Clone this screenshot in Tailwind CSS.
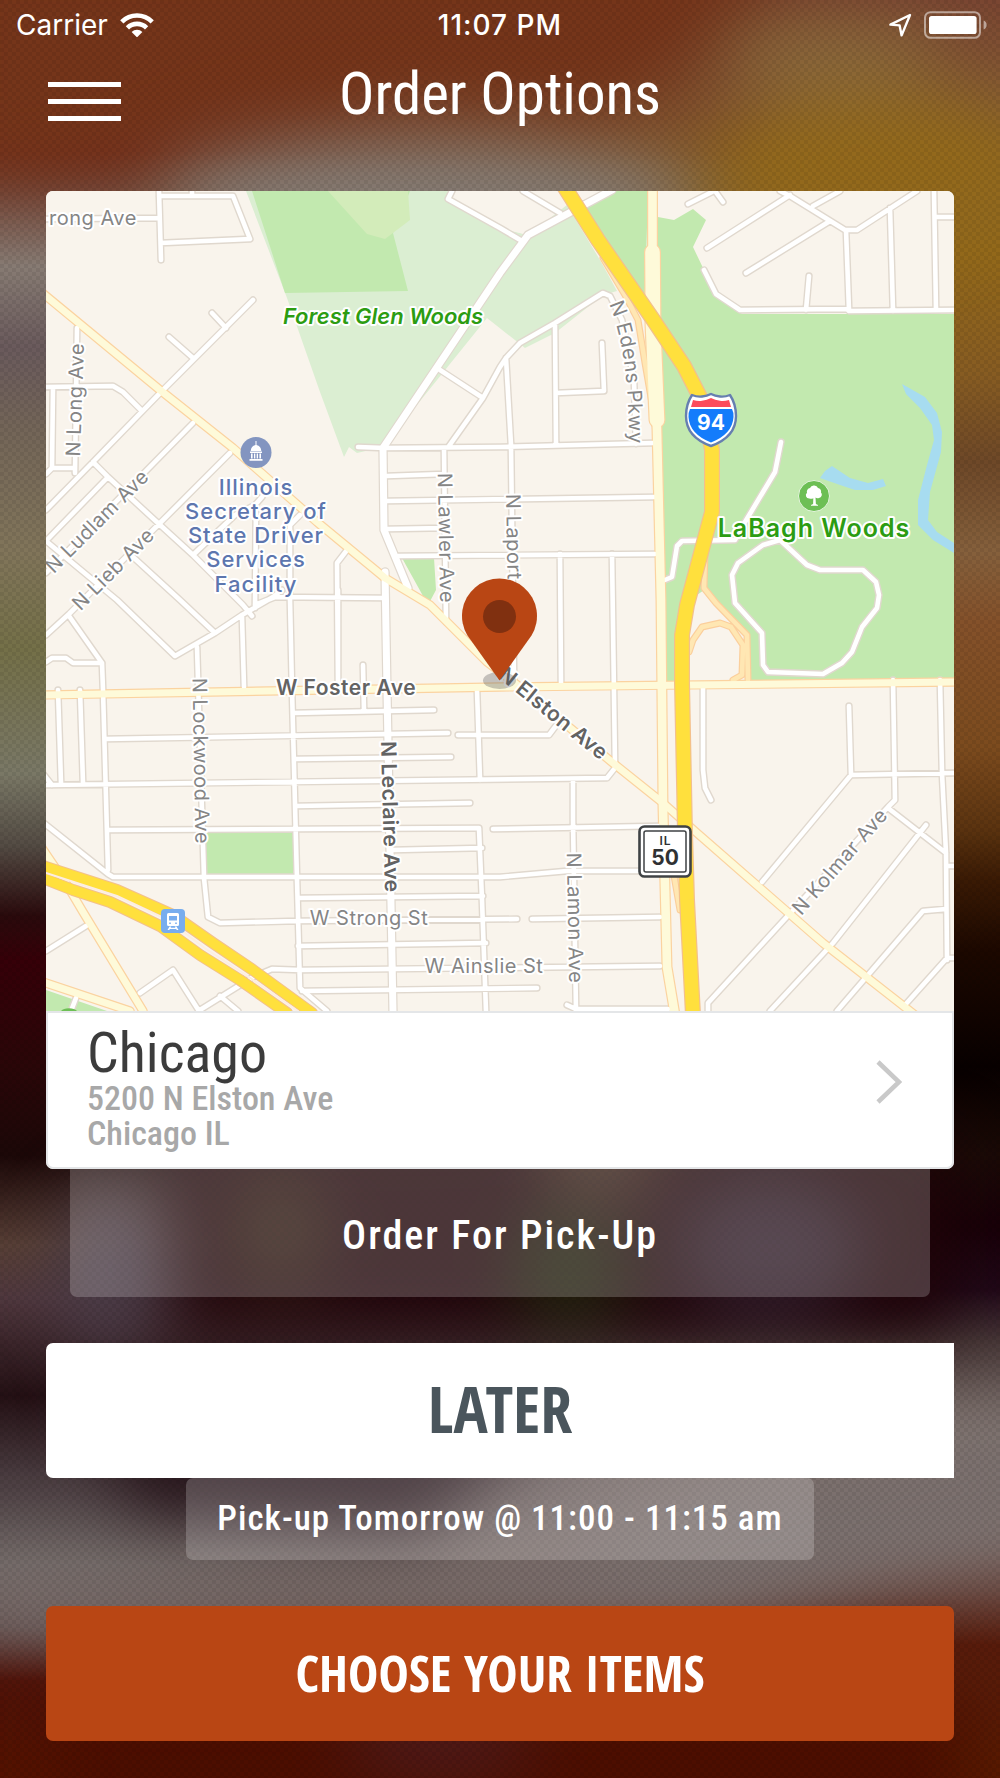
<!DOCTYPE html>
<html lang="en">
<head>
<meta charset="utf-8">
<meta name="viewport" content="width=device-width, initial-scale=1">
<title>Order Options</title>
<script src="https://cdn.jsdelivr.net/npm/@tailwindcss/browser@4"></script>
</head>
<body class="relative isolate flex min-h-screen flex-col overflow-x-hidden bg-[#1a0608] font-['Roboto_Condensed','Roboto',sans-serif] text-white">

<!-- Blurred backdrop -->
<svg class="absolute inset-0 -z-10 h-full w-full" viewBox="0 0 1000 1778" preserveAspectRatio="none" aria-hidden="true">
  <defs>
    <linearGradient id="bgLeft" x1="0" y1="0" x2="0" y2="1778" gradientUnits="userSpaceOnUse">
      <stop offset="0" stop-color="#73321a"/><stop offset=".085" stop-color="#74301f"/><stop offset=".105" stop-color="#754638"/>
      <stop offset=".15" stop-color="#877b73"/><stop offset=".195" stop-color="#6a5a5c"/><stop offset=".24" stop-color="#736558"/>
      <stop offset=".31" stop-color="#81755a"/><stop offset=".365" stop-color="#747048"/><stop offset=".435" stop-color="#7a7866"/>
      <stop offset=".475" stop-color="#544c44"/><stop offset=".515" stop-color="#2a0a0c"/><stop offset=".54" stop-color="#360008"/>
      <stop offset=".6" stop-color="#2a0608"/><stop offset=".65" stop-color="#1c0808"/><stop offset=".7" stop-color="#583f36"/>
      <stop offset=".73" stop-color="#50383e"/><stop offset=".785" stop-color="#241014"/><stop offset=".83" stop-color="#4a3c40"/>
      <stop offset=".88" stop-color="#6e6664"/><stop offset=".915" stop-color="#624c4a"/><stop offset=".945" stop-color="#501208"/><stop offset="1" stop-color="#541200"/>
    </linearGradient>
    <linearGradient id="bgRight" x1="0" y1="0" x2="0" y2="1778" gradientUnits="userSpaceOnUse">
      <stop offset="0" stop-color="#7a4632"/><stop offset=".06" stop-color="#855c34"/><stop offset=".1" stop-color="#8c6828"/><stop offset=".14" stop-color="#93691a"/>
      <stop offset=".21" stop-color="#875c22"/><stop offset=".26" stop-color="#6e4828"/><stop offset=".31" stop-color="#85603c"/>
      <stop offset=".35" stop-color="#84512a"/><stop offset=".42" stop-color="#7c4b1e"/><stop offset=".465" stop-color="#5c3410"/>
      <stop offset=".495" stop-color="#3a1a04"/><stop offset=".535" stop-color="#1c0800"/><stop offset=".6" stop-color="#080000"/>
      <stop offset=".65" stop-color="#1a0a06"/><stop offset=".69" stop-color="#180008"/><stop offset=".725" stop-color="#200818"/>
      <stop offset=".755" stop-color="#483838"/><stop offset=".81" stop-color="#847872"/><stop offset=".86" stop-color="#80706c"/>
      <stop offset=".895" stop-color="#6a4840"/><stop offset=".925" stop-color="#581c0c"/><stop offset="1" stop-color="#581a00"/>
    </linearGradient>
    <linearGradient id="fade" x1="0" x2="1" y1="0" y2="0">
      <stop offset=".1" stop-color="#000"/><stop offset=".9" stop-color="#fff"/>
    </linearGradient>
    <mask id="toRight"><rect width="1000" height="1778" fill="url(#fade)"/></mask>
    <filter id="soft" x="-60%" y="-60%" width="220%" height="220%" color-interpolation-filters="sRGB"><feGaussianBlur stdDeviation="32"/></filter>
    <pattern id="weave" width="8" height="8" patternUnits="userSpaceOnUse">
      <path d="M0 0h4v4H0zM4 4h4v4H4z" fill="#000" fill-opacity=".07"/>
    </pattern>
  </defs>
  <rect width="1000" height="1778" fill="url(#bgLeft)"/>
  <rect width="1000" height="1778" fill="url(#bgRight)" mask="url(#toRight)"/>
  <g filter="url(#soft)">
    <path d="M-60-60H800L690 60 600 115 400 95 240 115 60 170H-60z" fill="#75351a"/>
    <ellipse cx="430" cy="200" rx="270" ry="60" fill="#857b74"/>
    <ellipse cx="880" cy="170" rx="165" ry="75" fill="#93691c"/>
    <ellipse cx="830" cy="60" rx="110" ry="40" fill="#8a683c"/>
    <path d="M170 1140H950V1330H170z" fill="#200408"/>
    <ellipse cx="110" cy="1270" rx="50" ry="80" fill="#4a3c48"/>
    <ellipse cx="280" cy="1230" rx="50" ry="60" fill="#301a10"/>
    <ellipse cx="570" cy="1270" rx="60" ry="60" fill="#20200a"/>
    <ellipse cx="600" cy="1150" rx="60" ry="50" fill="#40281c"/>
    <ellipse cx="770" cy="1250" rx="90" ry="70" fill="#301c28"/>
    <path d="M80 1400H580L420 1530 140 1510z" fill="#26141a"/>
    <path d="M-40 1560L300 1570 560 1540 760 1470 1040 1400V1540L700 1625H-40z" fill="#7b706e"/>
    <path d="M60 1700H960V1850H60z" fill="#4c0e00"/>
    <ellipse cx="440" cy="1745" rx="100" ry="24" fill="#502024"/>
  </g>
  <rect width="1000" height="1778" fill="url(#weave)"/>
</svg>

<!-- Status bar -->
<div class="grid h-[50px] grid-cols-3 items-center px-4 font-['Inter',sans-serif] text-[28px] leading-8">
  <div class="flex items-center gap-3">
    <span>Carrier</span>
    <svg class="h-6 w-[34px]" viewBox="0 0 34 24" fill="none" stroke="#fff" stroke-width="4.6" role="img" aria-label="Wi-Fi">
      <path d="M1.8 8.8A21.6 21.6 0 0 1 32.2 8.8"/><path d="M7.4 14.8A13.6 13.6 0 0 1 26.6 14.8"/>
      <path d="M11.6 19A7.6 7.6 0 0 1 22.4 19L17 24.4z" fill="#fff" stroke="none"/>
    </svg>
  </div>
  <time class="text-center font-medium tracking-[1px]">11:07 PM</time>
  <div class="-mr-1 flex items-center justify-end gap-3">
    <svg class="h-6 w-6" viewBox="0 0 24 24" fill="none" stroke="#fff" stroke-width="2.4" stroke-linejoin="round" role="img" aria-label="Location"><path d="M22 2 2.4 11.6 11.6 12.4 13.6 22.4z"/></svg>
    <svg class="h-[28px] w-16" viewBox="0 0 64 28" role="img" aria-label="Battery full">
      <rect x="1" y="1.2" width="55" height="25.6" rx="5.5" fill="none" stroke="#fff" stroke-opacity=".5" stroke-width="2"/>
      <rect x="5" y="5" width="47.6" height="18" rx="2.6" fill="#fff"/>
      <path d="M59.6 9.4q3 1.2 3 4.6t-3 4.6z" fill="#fff" fill-opacity=".5"/>
    </svg>
  </div>
</div>

<!-- Title bar -->
<header class="grid h-[141px] grid-cols-[1fr_auto_1fr] items-start px-12">
  <button type="button" aria-label="Menu" class="mt-8 flex w-[73px] flex-col gap-3">
    <span class="h-[5px] w-full bg-white"></span><span class="h-[5px] w-full bg-white"></span><span class="h-[5px] w-full bg-white"></span>
  </button>
  <h1 class="mt-[6px] text-[59px] leading-[76px]">Order Options</h1>
</header>

<main class="flex flex-col px-[46px] pb-9">
  <!-- Restaurant card -->
  <section class="overflow-hidden rounded-[7px] bg-white">
    <svg class="block h-auto w-full font-['Inter',sans-serif]" viewBox="46 191 908 820" role="img" aria-label="Map of 5200 N Elston Ave">
      <defs>
        <path id="streets" d="M159 191 161 260M159 196H233L250 239 161 243M192 191V196M46 219 159 218M253 300 162 391 93 462 46 510M212 313 226 328M169 337 193 358M77 328 75 473M46 387 113 386 123 392 142 411M53 388 52 468M46 474 52 468H75M93 462 108 477 159 524 193 555 243 605 252 616M193 423 46 573M108 477 46 541 117 600 175 656 215 633 242 615 273 597 282 590M230 453 159 524 69 614 46 635M133 557 180 600 215 633M193 555 235 515 255 505 262 497M256 505 255 608M300 515 290 525V600L292 690 297 880 300 988 327 1011M255 605 275 597 385 598M347 550 337 563 338 685M358 447 385 448 500 447 653 443M440 370 483 398M444 448 446 622M387 476 444 474M387 501 655 497M387 529 444 528M398 556 655 554M449 446 483 398 500 367 506 358 520 343 555 323 603 293 610 296 622 320 634 380 636 444M506 358 511 445 514 680M555 323 556 444M602 343 604 391 556 393M560 554 561 683M612 554 615 765M523 191 560 213M500 228 522 241M452 191 448 199 500 228M688 204 712 192M715 191 723 202M790 195 707 248M780 191 790 196 845 230H857L917 191M830 221 746 273M813 206 840 191M846 230 849 310M890 208 893 311M934 191 936 310M936 217H954M704 270 716 294 740 310 847 309 849 311 954 310M809 276 806 310M781 442 775 472 745 522 735 540 682 541 677 546 672 577 660 582M780 540 763 545 738 563 732 575 735 603 762 633 763 665 768 672 823 674 842 663 852 652 862 627 877 608 879 595 876 582 863 570H820L807 565 780 540M703 685V770L705 788 711 800M849 706 851 775M954 773 851 775 762 882M893 680 895 800 888 807 784 920 708 1003V1011M888 808 946 853M940 680 942 773 946 853 947 960M926 825 833 943 770 1011M946 866H954M946 909 923 911 868 975 837 1011M954 958H947L905 1005M458 735H549L555 727M46 785 607 778 615 768M40 770 52 785M573 779V820L576 1011M493 829 660 826M40 820 108 874 113 877H500L567 871 655 871M204 878 208 917 220 923 297 921 517 919M532 919 660 917M200 1010 253 977 272 969 300 970 660 966M302 991 537 988M567 1005 576 1009H668M46 662 52 658H66L73 663H102L103 690 108 870M69 616 102 663M58 690 61 783M80 690 83 783M242 617 244 687M197 647 204 877M338 590V685M363 665 364 711M293 713 434 710M105 739 448 733M295 759 451 757M296 806 470 803M108 830 479 828 482 900 486 1011M393 850 482 848M298 898 483 896M298 946 486 943M477 690 480 780M140 993 173 970 199 1011M46 951 86 926M220 996 238 1011M71 1011 76 998"/>
        <path id="avenues" d="M612 190 528 235 500 273 383 448 384 530 408 588M385 572 387 690 393 1012"/>
        <path id="arterials" d="M40 291 160 390 233 448 317 522 385 578 430 605 487 662 520 687 613 763 663 803 697 833 823 943 915 1015M40 695 500 687 960 682M40 845 67 885 83 912 143 1011M40 981 130 1011"/>
        <path id="ramps" d="M603 258 625 295 638 320 645 363 654 415M705 552 704 588 716 603 747 635 748 680M689 652 693 640 702 627 720 623 731 627 743 645 742 675 733 680M673 870 680 910"/>
        <path id="cicero" d="M652.5 190V245L652.5 330 657 430 661 600 663 807 667 967 675 1015"/>
        <path id="expressway" d="M562 183 598 240 652 318 684 366 703 403 712 450V512L687 605 682 635V683L685 833 687 900 693 1015"/>
        <path id="kennedyA" d="M40 865 117 890 173 915 213 943 253 970 312 1013"/>
        <path id="kennedyB" d="M40 877 73 890 110 902 160 926 200 955 240 980 287 1013"/>
        <path id="edens" d="M609 304Q629 350 629 442"/>
      </defs>
      <rect x="46" y="191" width="908" height="820" fill="#f9f4ec"/>
      <path d="M246 191 287 298 320 392 344 457 349 447 357 453 383 447 487 318 525 348 555 333 603 295 617 291 600 260 567 205 528 235 500 228 448 199 452 191z" fill="#dbeed2"/>
      <path d="M458 203 462 191H560L528 235 500 228z" fill="#f9f4ec"/>
      <path d="M252 191 285 293 408 291 393 233 410 191z" fill="#c2e9af"/>
      <path d="M328 191 367 234 385 239 410 220 408 191z" fill="#d3ecba"/>
      <path d="M578 202 612 191H648L645 300zM658 217 674 220 693 209 706 220 693 247 704 270 716 296 742 314H954V682H751L749 637 716 603 704 590 690 600 682 683H664L655 350zM402 558H434L436 590 428 605zM205 832H293V874H205zM46 990 107 1011H46z" fill="#c2e9af"/>
      <path d="M702 592 748 637V682H684V640z" fill="#f9f4ec"/>
      <path d="M902 384 925 397 937 413 942 432 941 452 930 492 928 520 937 532 954 543V553L933 540 918 525V500L927 465 934 440 932 425 920 408 906 394zM820 478 825 471 832 466 850 478 868 483 883 479 886 486 873 490H855L840 485z" fill="#a7dcf0"/>

      <g fill="none" stroke-linejoin="round" stroke-linecap="round">
        <use href="#streets" stroke="#e0d8ce" stroke-width="7.4"/>
        <use href="#avenues" stroke="#e0d8ce" stroke-width="9.4"/>
        <use href="#ramps" stroke="#fbcf9c" stroke-width="7"/>
        <use href="#arterials" stroke="#fbd3a0" stroke-width="9.4"/>
        <use href="#cicero" stroke="#fbd3a0" stroke-width="11"/>
        <path d="M652.5 252 653 325 657 420" stroke="#fbd3a0" stroke-width="17"/>
        <use href="#streets" stroke="#fff" stroke-width="4.6"/>
        <use href="#avenues" stroke="#fff" stroke-width="7"/>
        <use href="#ramps" stroke="#ffe7b3" stroke-width="4.6"/>
        <use href="#arterials" stroke="#fefad9" stroke-width="7"/>
        <use href="#cicero" stroke="#fefad9" stroke-width="8.6"/>
        <path d="M652.5 252 653 325 657 420" stroke="#fefad9" stroke-width="14.6"/>
        <use href="#expressway" stroke="#f3c08c" stroke-width="16"/>
        <use href="#expressway" stroke="#ffe03d" stroke-width="13.6"/>
        <use href="#kennedyB" stroke="#f3c08c" stroke-width="12"/>
        <use href="#kennedyA" stroke="#f3c08c" stroke-width="12"/>
        <use href="#kennedyB" stroke="#ffe03d" stroke-width="10"/>
        <use href="#kennedyA" stroke="#ffe03d" stroke-width="10"/>
        <path d="M46 873 117 896 168 920 206 949 246 975 298 1011" stroke="#fdeee0" stroke-width="2"/>
      </g>

      <g stroke="#fff" stroke-width="4" stroke-linejoin="round" class="[paint-order:stroke]">
        <g class="text-[20px] tracking-[0.5px]" fill="#858585">
          <text x="49" y="225">rong Ave</text>
          <text text-anchor="middle" transform="translate(82 400) rotate(-88)">N Long Ave</text>
          <text text-anchor="middle" transform="translate(102 526) rotate(-45)">N Ludlam Ave</text>
          <text text-anchor="middle" transform="translate(118 574) rotate(-45)">N Lieb Ave</text>
          <text text-anchor="middle" transform="translate(439 538) rotate(89)">N Lawler Ave</text>
          <text transform="translate(506 494) rotate(89)">N Laport</text>
          <text text-anchor="middle" transform="translate(194 761) rotate(89)">N Lockwood Ave</text>
          <text text-anchor="middle" transform="translate(568 918) rotate(89)">N Lamon Ave</text>
          <text text-anchor="middle" transform="translate(845 866) rotate(-49)">N Kolmar Ave</text>
          <text text-anchor="middle" x="369" y="925">W Strong St</text>
          <text text-anchor="middle" x="484" y="973">W Ainslie St</text>
          <text><textPath href="#edens">N Edens Pkwy</textPath></text>
        </g>
        <g class="text-[21px] font-semibold tracking-[0.5px]" fill="#636363" text-anchor="middle">
          <text x="346" y="695">W Foster Ave</text>
          <text transform="translate(383 817) rotate(88.500)">N Leclaire Ave</text>
          <text transform="translate(549 719) rotate(39)">N Elston Ave</text>
        </g>
        <g class="text-[22px] font-medium tracking-[1px]" fill="#5d76ae" text-anchor="middle">
          <text x="256" y="495">Illinois</text><text x="256" y="519">Secretary of</text><text x="256" y="543">State Driver</text><text x="256" y="567">Services</text><text x="256" y="592">Facility</text>
        </g>
        <text x="383" y="324" text-anchor="middle" class="text-[22px] font-semibold italic" fill="#2c9c12">Forest Glen Woods</text>
        <text x="814" y="537" text-anchor="middle" class="text-[25px] font-semibold tracking-[1px]" fill="#2c9c12">LaBagh Woods</text>
      </g>

      <!-- Government building -->
      <circle cx="256" cy="452.500" r="15.500" fill="#8395c0"/>
      <path d="M255.500 441h1v4q4.500 1 4.800 6h-10.600q.3-5 4.800-6zM250 451.500h12v1.500h-12zM251 453.500h1.600v5H251zM254 453.500h1.300v5H254zM256.700 453.500h1.300v5h-1.300zM259.400 453.500h1.600v5h-1.600zM249.500 459h13v1.800h-13z" fill="#fff"/>
      <!-- Park -->
      <circle cx="814" cy="496" r="15.500" fill="#6dbf55" stroke="#e5f5de" stroke-width="1"/>
      <path d="M814 485.500a4 4 0 0 1 4 2.500 3.600 3.600 0 0 1 3 4.500 3.300 3.300 0 0 1-2 5.500q-2 .6-3.500-.4l.4 6.500 2.100.8v.8h-7v-.8l2.100-.8.2-5.800q-2 .9-4 .2a3.300 3.300 0 0 1-2.300-5.800 3.600 3.600 0 0 1 3-4.700 4 4 0 0 1 4-2.500z" fill="#fff"/>
      <path d="M61 1011a9 5 0 0 1 16 0z" fill="#6dbf55"/>
      <!-- Train station -->
      <rect x="161" y="909" width="24" height="24" rx="4" fill="#78adee"/>
      <path d="M168.500 913h9q1.500 0 1.500 1.500v10q0 1.500-1.500 1.500h-9q-1.500 0-1.500-1.500v-10q0-1.500 1.500-1.500zm.5 3v4.500h8V916zm.2 6.500v1.600h1.600v-1.600zm6 0v1.600h1.600v-1.600zM169.500 926.500h1.800l-.7 1.300h4.800l-.7-1.300h1.800l2 3.500h-1.800l-.5-1h-6.400l-.5 1h-1.800z" fill="#fff" fill-rule="evenodd"/>
      <!-- Interstate shield -->
      <path d="M692 395q5 2 10 1.500 5-.5 9-2.500 4 2 9 2.500 5 .5 10-1.500 6 9 6 21 0 21-25 30-25-9-25-30 0-12 6-21z" fill="#fff" stroke="#667fb0" stroke-width="2.400" stroke-linejoin="round"/>
      <path d="M693 400q5 1.500 9 .8 5-.6 9-2.800 4 2.200 9 2.800 4 .7 9-.8l2 7h-40z" fill="#fc4b5b"/>
      <path d="M690 409h42q2 4 1.500 8-1 17-22.500 25.500-21.500-8.500-22.500-25.500-.5-4 1.500-8z" fill="#147cfb"/>
      <text x="711" y="430" text-anchor="middle" fill="#fff" class="text-[21px] font-bold">94</text>
      <!-- Illinois route marker -->
      <rect x="639.500" y="826.500" width="51" height="50" rx="5" fill="#fff" stroke="#3f4244" stroke-width="2.600"/>
      <rect x="644" y="831" width="42" height="41" rx="2" fill="#fff" stroke="#3f4244" stroke-width="1.500"/>
      <g text-anchor="middle" fill="#2f3133">
        <text x="665.500" y="845" class="text-[12px] font-semibold tracking-[1px]">IL</text>
        <text x="665" y="865" class="text-[21px] font-bold">50</text>
      </g>
      <!-- Selected restaurant -->
      <ellipse cx="499.500" cy="680.500" rx="16.500" ry="8.500" fill="#555" fill-opacity=".32"/>
      <path d="M499.500 680.500 467.500 635.500A37.500 37.500 0 1 1 531.500 635.500z" fill="#b94614"/>
      <circle cx="499.500" cy="616.500" r="16.500" fill="#803010"/>
    </svg>

    <a href="#location" class="flex items-center justify-between rounded-b-[7px] border-2 border-[#e4e6e8] pb-4 pl-[39px] pr-[50px] pt-3">
      <span class="flex flex-col">
        <span class="text-[56px] leading-[56px] text-[#3c3c3c]">Chicago</span>
        <span class="text-[34px] font-medium leading-[35px] text-[#a8a8a8]">5200 N Elston Ave<br>Chicago IL</span>
      </span>
      <svg class="mb-3 h-11 w-[26px]" viewBox="0 0 26 44" fill="none" stroke="#c9c9c9" stroke-width="4.600" aria-hidden="true"><path d="M2 2 23 22 2 42"/></svg>
    </a>
  </section>

  <p class="mx-6 rounded-b-[7px] bg-white/20 pb-[33px] pt-[39px] text-center text-[40px] font-medium leading-14 tracking-[2px]">Order For Pick-Up</p>

  <button type="button" class="mt-[46px] h-[135px] rounded-l-[7px] bg-white pb-1 font-['Open_Sans_Condensed','Open_Sans',sans-serif] text-[64px] font-bold leading-[80px] text-[#4a555c]">LATER</button>
  <p class="self-center rounded-[7px] bg-white/20 px-[31px] py-[18px] text-center text-[35px] font-medium leading-[46px] tracking-[1px]">Pick-up Tomorrow @ 11:00 - 11:15 am</p>

  <button type="button" class="mt-[46px] h-[135px] rounded-[7px] bg-[#b94614] pb-1 font-['Open_Sans_Condensed','Open_Sans',sans-serif] text-[51px] font-bold leading-[64px]">CHOOSE YOUR ITEMS</button>
</main>
</body>
</html>
